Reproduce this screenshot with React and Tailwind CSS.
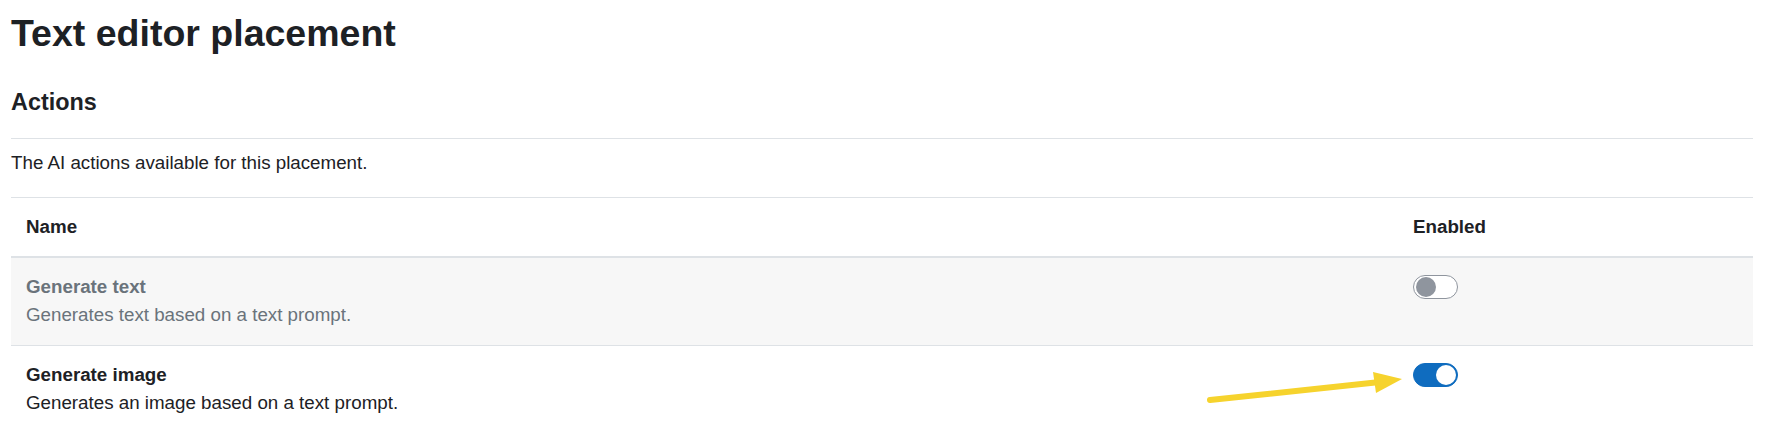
import React from "react";

const actions = [
    { name: "Generate text", desc: "Generates text based on a text prompt.", enabled: false },
    { name: "Generate image", desc: "Generates an image based on a text prompt.", enabled: true },
];

function Toggle({ on }) {
    if (on) {
        return (
            <div className="w-[45px] h-[24px] rounded-full bg-[#0f6cbf] border border-[#0f6cbf] flex items-center justify-end pr-[1px]">
                <div className="w-[20px] h-[20px] rounded-full bg-white" />
            </div>
        );
    }
    return (
        <div className="w-[45px] h-[24px] rounded-full bg-white border border-[#8f959e] flex items-center pl-[2px]">
            <div className="w-[20px] h-[20px] rounded-full bg-[#8f959e]" />
        </div>
    );
}

export default function App() {
    return (
        <div className="relative min-h-[437px] bg-white text-[#1d2125] font-['Liberation_Sans',Arial,sans-serif] pl-[11px] pr-[28px] pt-[11px]">
            {/* Page heading */}
            <h2 className="text-[37.5px] leading-[1.2] font-bold">Text editor placement</h2>

            <h4 className="mt-[32px] text-[23.4px] leading-[1.2] font-bold">Actions</h4>

            <div className="mt-[22px] border-t border-[#dee2e6] pt-[10px] pb-[20px] text-[18.75px] leading-[1.5]">
                The AI actions available for this placement.
            </div>

            {/* Actions table */}
            <table className="w-full text-[18.75px] leading-[1.5] border-collapse">
                <thead>
                    <tr className="border-t border-b-2 border-[#dee2e6]">
                        <th className="text-left font-bold p-[15px]">Name</th>
                        <th className="text-left font-bold p-[15px] w-[355px]">Enabled</th>
                    </tr>
                </thead>
                <tbody>
                    {actions.map((a) => (
                        <tr
                            key={a.name}
                            className={`border-t border-[#dee2e6] ${a.enabled ? "" : "bg-[#f7f7f7] text-[#6a737b]"}`}
                        >
                            <td className="p-[15px] align-top">
                                <div className="font-bold">{a.name}</div>
                                <div>{a.desc}</div>
                            </td>
                            <td className="p-[15px] pt-[17px] align-top">
                                <Toggle on={a.enabled} />
                            </td>
                        </tr>
                    ))}
                </tbody>
            </table>

            {/* Annotation arrow */}
            <svg className="absolute left-0 top-0 pointer-events-none" width="1781" height="437" viewBox="0 0 1781 437">
                <line x1="1210" y1="400" x2="1380" y2="382" stroke="#f6d32d" strokeWidth="6" strokeLinecap="round" />
                <polygon points="1373,372 1402,379 1376,393" fill="#f6d32d" />
            </svg>
        </div>
    );
}
